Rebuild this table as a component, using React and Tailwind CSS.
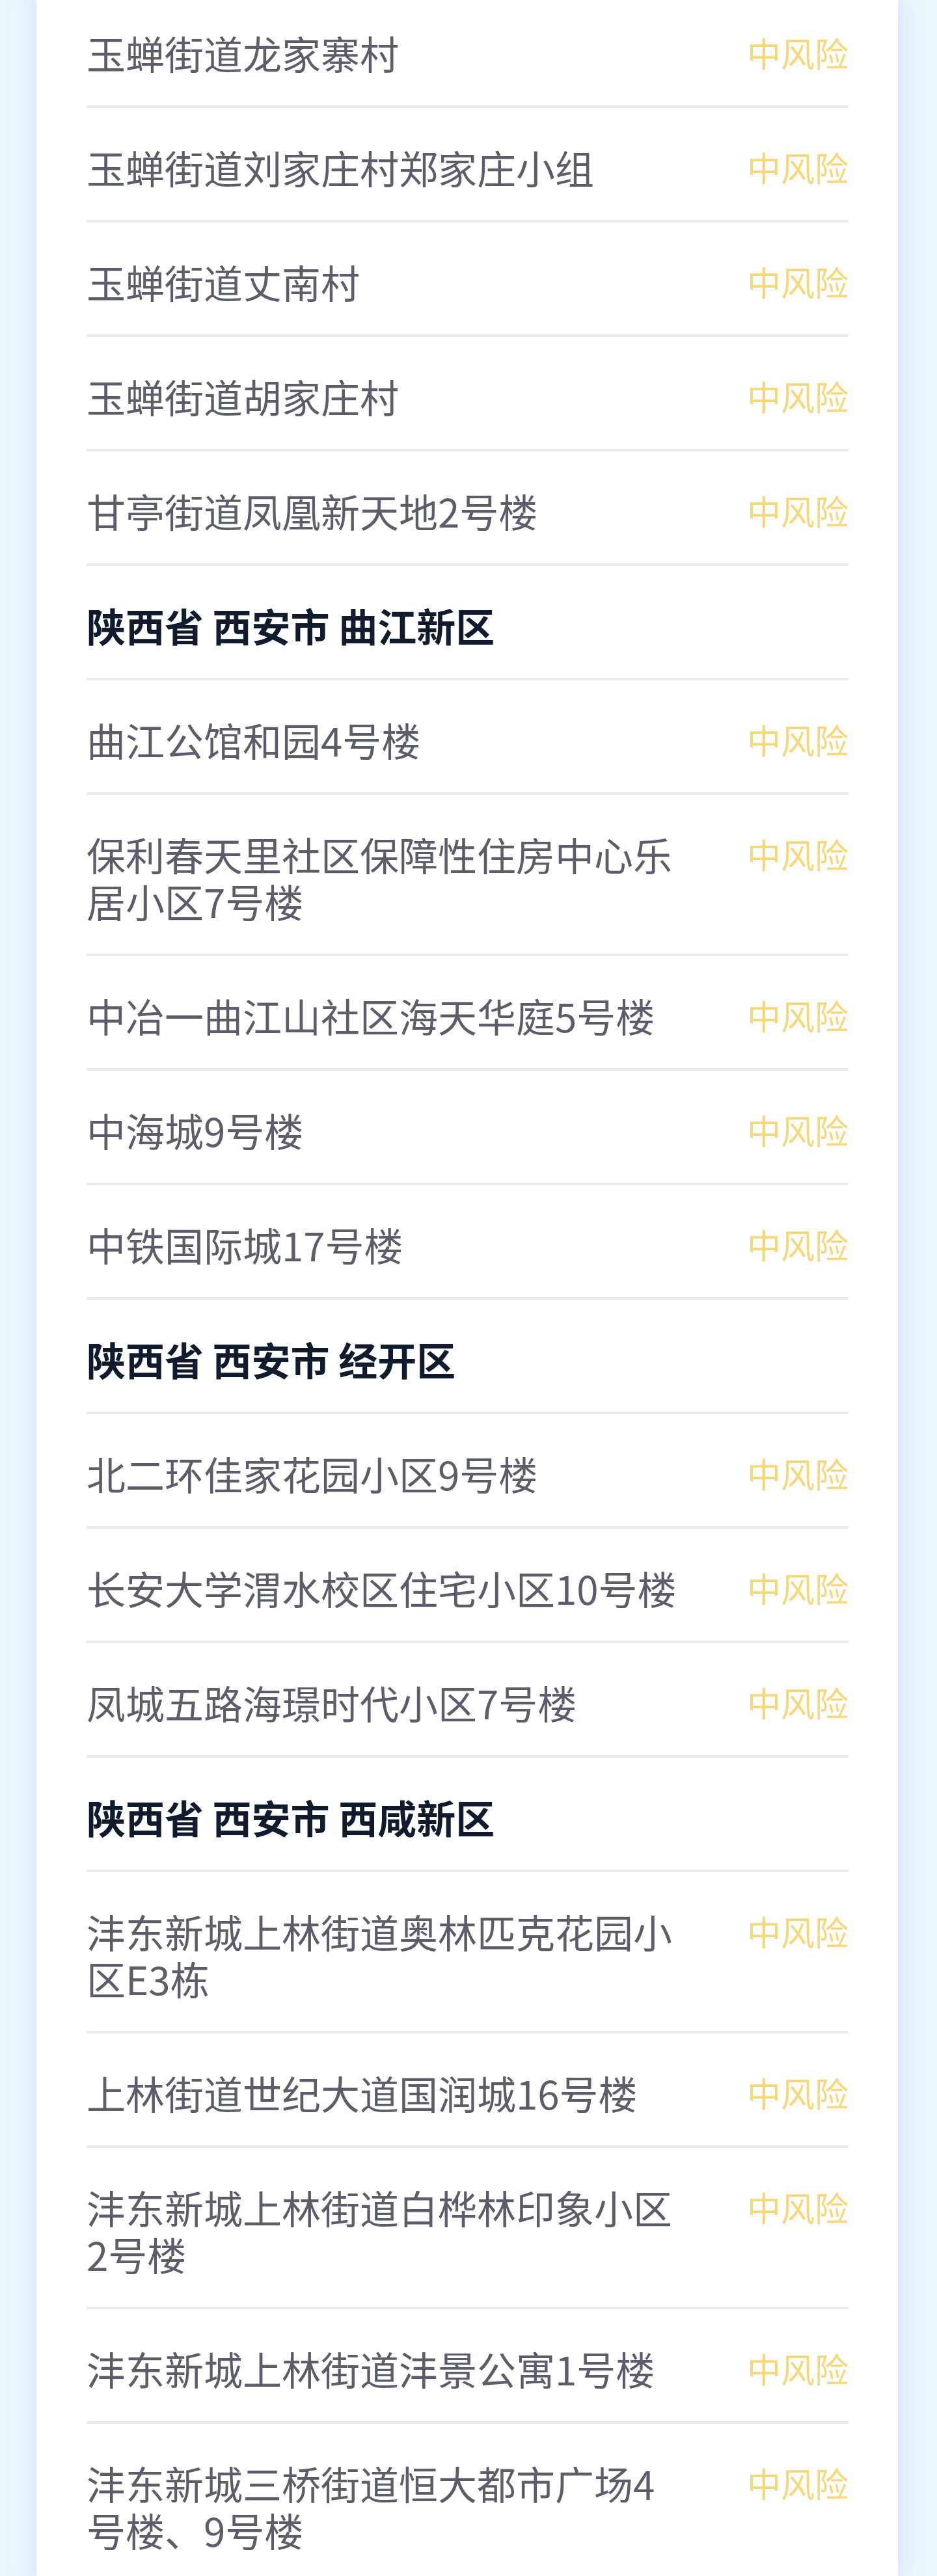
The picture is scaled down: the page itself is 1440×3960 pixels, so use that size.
import React from "react";

const groups = [
  {
    title: null,
    items: [
      "玉蝉街道龙家寨村",
      "玉蝉街道刘家庄村郑家庄小组",
      "玉蝉街道丈南村",
      "玉蝉街道胡家庄村",
      "甘亭街道凤凰新天地2号楼",
    ],
  },
  {
    title: "陕西省 西安市 曲江新区",
    items: [
      "曲江公馆和园4号楼",
      "保利春天里社区保障性住房中心乐居小区7号楼",
      "中冶一曲江山社区海天华庭5号楼",
      "中海城9号楼",
      "中铁国际城17号楼",
    ],
  },
  {
    title: "陕西省 西安市 经开区",
    items: [
      "北二环佳家花园小区9号楼",
      "长安大学渭水校区住宅小区10号楼",
      "凤城五路海璟时代小区7号楼",
    ],
  },
  {
    title: "陕西省 西安市 西咸新区",
    items: [
      "沣东新城上林街道奥林匹克花园小区E3栋",
      "上林街道世纪大道国润城16号楼",
      "沣东新城上林街道白桦林印象小区2号楼",
      "沣东新城上林街道沣景公寓1号楼",
      "沣东新城三桥街道恒大都市广场4号楼、9号楼",
    ],
  },
];

const AreaRow = ({ name }) => (
  <li className="flex items-start justify-between pt-[55px] pb-[45px] border-b-4 border-[#ebebeb]">
    <span className="max-w-[920px] text-[60px] leading-[72px] text-[#5c5d6a]">{name}</span>
    <span className="shrink-0 pt-[3px] text-[52px] leading-[66px] text-[#f7d878]">中风险</span>
  </li>
);

const RegionHeader = ({ title }) => (
  <li className="pt-[55px] pb-[45px] border-b-4 border-[#ebebeb]">
    <span className="text-[60px] leading-[72px] font-bold text-[#101c2e]">{title}</span>
  </li>
);

export default function App() {
  return (
    <div className="min-h-screen overflow-hidden bg-[#ecf6fd] font-['Noto_Sans_CJK_SC','Noto_Sans',sans-serif]">
      <div className="ml-[56px] w-[1324px] min-h-screen bg-white pl-[77px] pr-[76px] shadow-[0_0_36px_rgba(150,185,225,0.35)]">
        <ul className="-mt-[10px]">
          {groups.map((g, gi) => (
            <React.Fragment key={gi}>
              {g.title && <RegionHeader title={g.title} />}
              {g.items.map((name) => (
                <AreaRow key={name} name={name} />
              ))}
            </React.Fragment>
          ))}
        </ul>
      </div>
    </div>
  );
}
